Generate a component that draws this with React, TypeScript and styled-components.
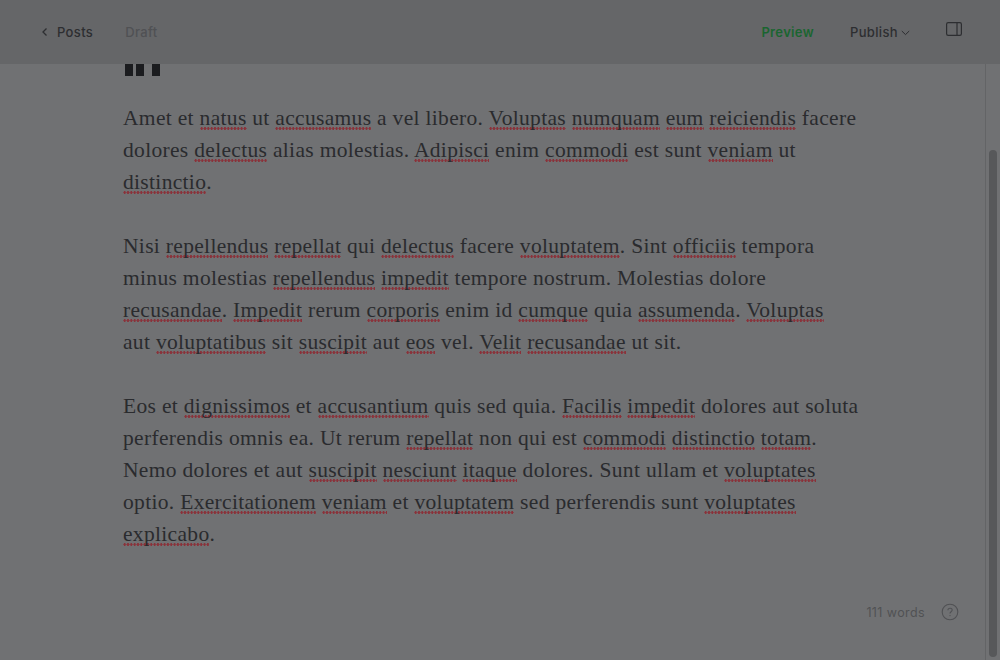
import styled, { createGlobalStyle } from "styled-components";

const paragraphs = [
  [
    "Amet et *natus* ut *accusamus* a vel libero. *Voluptas* *numquam* *eum* *reiciendis* facere",
    "dolores *delectus* alias molestias. *Adipisci* enim *commodi* est sunt *veniam* ut",
    "*distinctio*.",
  ],
  [
    "Nisi *repellendus* *repellat* qui *delectus* facere *voluptatem*. Sint *officiis* tempora",
    "minus molestias *repellendus* *impedit* tempore nostrum. Molestias dolore",
    "*recusandae*. *Impedit* rerum *corporis* enim id *cumque* quia *assumenda*. *Voluptas*",
    "aut *voluptatibus* sit *suscipit* aut *eos* vel. *Velit* *recusandae* ut sit.",
  ],
  [
    "Eos et *dignissimos* et *accusantium* quis sed quia. *Facilis* *impedit* dolores aut soluta",
    "perferendis omnis ea. Ut rerum *repellat* non qui est *commodi* *distinctio* *totam*.",
    "Nemo dolores et aut *suscipit* *nesciunt* *itaque* dolores. Sunt ullam et *voluptates*",
    "optio. *Exercitationem* *veniam* et *voluptatem* sed perferendis sunt *voluptates*",
    "*explicabo*.",
  ],
];

function renderLine(line: string) {
  return line.split("*").map((part, i) =>
    i % 2 === 1 ? <Misspelled key={i}>{part}</Misspelled> : part
  );
}

export default function App() {
  return (
    <Page>
      <GlobalStyle />
      <Header>
        <HeaderGroup>
          <BackLink>
            <svg width="8" height="10" viewBox="0 0 8 10" fill="none">
              <path d="M5.5 1.5 2 5l3.5 3.5" stroke="#2d2e31" strokeWidth="1.3" />
            </svg>
            Posts
          </BackLink>
          <Status>Draft</Status>
        </HeaderGroup>
        <HeaderActions>
          <Preview>Preview</Preview>
          <Publish>
            Publish
            <svg width="9" height="6" viewBox="0 0 9 6" fill="none">
              <path d="M.8 1 4.5 4.6 8.2 1" stroke="#2d2e31" strokeWidth="1" />
            </svg>
          </Publish>
          <PanelToggle aria-label="Toggle sidebar">
            <svg width="16" height="14" viewBox="0 0 16 14" fill="none">
              <rect x=".6" y=".6" width="14.8" height="12.8" rx="1.6" stroke="#2d2e31" strokeWidth="1.2" />
              <path d="M11 1v12" stroke="#2d2e31" strokeWidth="1.2" />
            </svg>
          </PanelToggle>
        </HeaderActions>
      </Header>

      <Body>
        <Editor>
          <TitleRemnant>
            <Stem />
            <Stem $gap={3} />
            <Stem $gap={8} />
          </TitleRemnant>
          <Content>
            {paragraphs.map((lines, i) => (
              <Paragraph key={i}>
                {lines.map((line, j) => (
                  <Line key={j}>{renderLine(line)}</Line>
                ))}
              </Paragraph>
            ))}
          </Content>
          <Footer>
            <WordCount>111 words</WordCount>
            <svg width="18" height="18" viewBox="0 0 18 18" fill="none">
              <circle cx="9" cy="9" r="7.8" stroke="#505154" strokeWidth="1.1" />
              <path
                d="M6.9 7.2c0-1.2 1-2 2.2-2s2.1.8 2.1 1.9c0 1.6-2.2 1.7-2.2 3.3"
                stroke="#505154"
                strokeWidth="1.1"
              />
              <circle cx="9" cy="12.6" r=".7" fill="#505154" />
            </svg>
          </Footer>
        </Editor>
        <ScrollTrack>
          <ScrollThumb />
        </ScrollTrack>
      </Body>
    </Page>
  );
}

const GlobalStyle = createGlobalStyle`
  html, body {
    margin: 0;
    padding: 0;
    background: #707173;
  }
`;

const Page = styled.div`
  width: 1000px;
  height: 660px;
  overflow: hidden;
  display: flex;
  flex-direction: column;
  background: #707173;
`;

const Header = styled.header`
  height: 64px;
  flex: none;
  box-sizing: border-box;
  padding: 0 38px 0 41px;
  display: flex;
  align-items: center;
  justify-content: space-between;
  background: #656668;
  font-family: Inter, "Liberation Sans", sans-serif;
  font-size: 13px;
  font-weight: 500;
  letter-spacing: 0.35px;
  color: #2d2e31;
`;

const HeaderGroup = styled.div`
  display: flex;
  align-items: center;
  gap: 32px;
`;

const BackLink = styled.a`
  display: flex;
  align-items: center;
  gap: 8px;
`;

const Status = styled.span`
  color: #505154;
  font-weight: 500;
`;

const HeaderActions = styled.div`
  display: flex;
  align-items: center;
`;

const Preview = styled.a`
  color: #1a6530;
  font-weight: 600;
  margin-right: 36px;
`;

const Publish = styled.a`
  display: flex;
  align-items: center;
  gap: 3px;
  margin-right: 36px;

  svg {
    margin-top: 2px;
  }
`;

const PanelToggle = styled.button`
  display: flex;
  border: none;
  padding: 0;
  margin-top: -6px;
  background: none;
`;

const Body = styled.div`
  flex: 1;
  min-height: 0;
  display: flex;
`;

const Editor = styled.main`
  flex: 1;
  min-width: 0;
  display: flex;
  flex-direction: column;
  padding-left: 123px;
  box-sizing: border-box;
`;

const TitleRemnant = styled.div`
  height: 12px;
  flex: none;
  display: flex;
  padding-left: 2px;
`;

const Stem = styled.span<{ $gap?: number }>`
  width: 8px;
  background: #1b1c1f;
  margin-left: ${(p) => p.$gap ?? 0}px;
`;

const Content = styled.div`
  margin-top: 26px;
  display: flex;
  flex-direction: column;
  gap: 32px;
  font-family: "Liberation Serif", Georgia, serif;
  font-size: 21.5px;
  line-height: 32px;
  letter-spacing: 0.32px;
  color: #2a2b2e;
`;

const Paragraph = styled.p`
  margin: 0;
`;

const Line = styled.span`
  display: block;
  white-space: nowrap;
`;

// spell-check squiggle: round dots, tighter than a dotted text-decoration
const Misspelled = styled.span`
  background-image: radial-gradient(circle at center, #8a323a 1.1px, transparent 1.5px);
  background-size: 3.33px 3px;
  background-repeat: repeat-x;
  background-position: 0 calc(100% - 0.5px);
`;

const Footer = styled.footer`
  margin-top: 53px;
  padding-right: 26px;
  display: flex;
  justify-content: flex-end;
  align-items: center;
  gap: 16px;
  font-family: Inter, "Liberation Sans", sans-serif;
`;

const WordCount = styled.span`
  font-size: 12.5px;
  letter-spacing: 0.4px;
  color: #505154;
`;

const ScrollTrack = styled.aside`
  width: 15px;
  flex: none;
  box-sizing: border-box;
  border-left: 1px solid #636466;
  padding: 86px 3px 3px 3px;
  display: flex;
`;

const ScrollThumb = styled.div`
  flex: 1;
  border-radius: 4px;
  background: #57585a;
`;
